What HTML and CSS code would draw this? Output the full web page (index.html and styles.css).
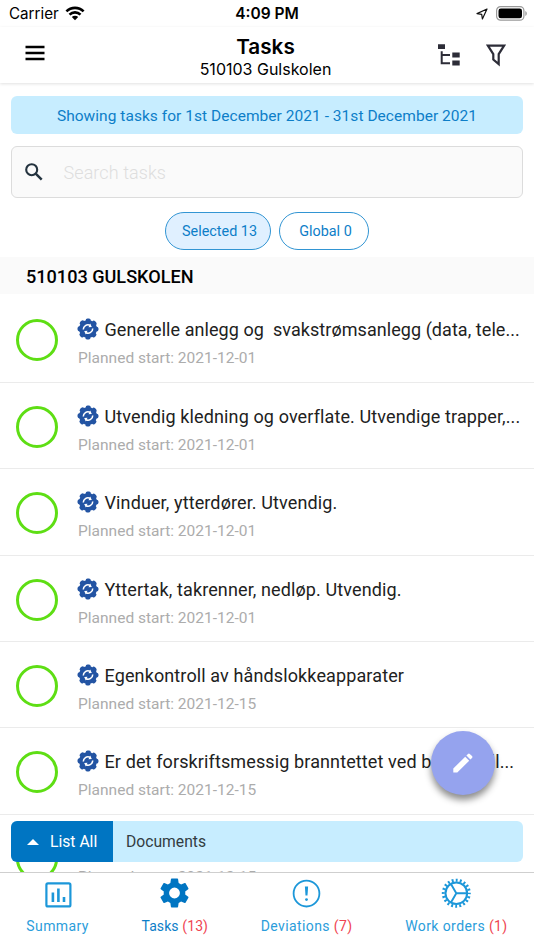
FILE: index.html
```
<!DOCTYPE html>
<html lang="en">
<head>
    <meta charset="UTF-8">
    <meta name="viewport" content="width=device-width, initial-scale=1.0">
    <title>Tasks</title>
    <link rel="stylesheet" href="styles.css">
</head>
<body>
    <svg class="sprite">
        <symbol id="recurring" viewBox="0 0 22 22">
            <circle cx="11" cy="11" r="9" fill="#2354a3"/>
            <circle cx="11" cy="11" r="8.6" fill="none" stroke="#2354a3" stroke-width="3.8" stroke-linecap="round" stroke-dasharray="1.4 5.354" stroke-dashoffset=".7"/>
            <path d="M6.300 11.600a4.700 4.700 0 0 1 6.700-4.400M15.700 10.400a4.700 4.700 0 0 1-6.700 4.400" fill="none" stroke="#fff" stroke-width="1.500"/>
            <path d="M13.200 5.600l1.600 3.300-3.300.3zM8.800 16.400l-1.600-3.300 3.300-.3z" fill="#fff"/>
        </symbol>
    </svg>

    <div class="screen">
        <div class="status-bar">
            <div class="carrier">
                <span>Carrier</span>
                <svg width="20" height="15" viewBox="0 0 20 15">
                    <path d="M1.400 5.400a12.200 12.200 0 0 1 17.200 0M4.500 8.600a7.800 7.800 0 0 1 11 0" fill="none" stroke="#000" stroke-width="2.600"/>
                    <path d="M6.800 11.100a4.600 4.600 0 0 1 6.400 0L10 14.300z"/>
                </svg>
            </div>
            <div class="clock">4:09 PM</div>
            <div class="battery">
                <svg width="12" height="12" viewBox="0 0 12 12">
                    <path d="M11 1L1 5.600l4.700.7.700 4.700z" fill="none" stroke="#111" stroke-width="1.200" stroke-linejoin="round"/>
                </svg>
                <svg width="31" height="15" viewBox="0 0 31 15">
                    <rect x=".6" y=".6" width="27.300" height="13.600" rx="4" fill="#fff" stroke="#999" stroke-width="1.200"/>
                    <rect x="2.500" y="2.500" width="23.500" height="9.800" rx="2.300"/>
                    <path d="M29.300 5v5c2-.8 2-4.200 0-5z" fill="#999"/>
                </svg>
            </div>
        </div>

        <div class="header">
            <svg class="menu-icon" width="20" height="16" viewBox="0 0 20 16">
                <path d="M.5 2h19M.5 8h19M.5 14h19" stroke="#000" stroke-width="2.500"/>
            </svg>
            <div class="heading">
                <h1>Tasks</h1>
                <p>510103 Gulskolen</p>
            </div>
            <div class="actions">
                <svg width="22" height="22" viewBox="0 0 22 22">
                    <path d="M0 .3h7v4.700H0zM14.300 8.500h7.400v5h-7.400zM14.300 16.500h7.400v5h-7.400z" fill="#2d2d38"/>
                    <path d="M3.700 7.300v12h8.300M3.700 11h8.300" fill="none" stroke="#2d2d38" stroke-width="2"/>
                </svg>
                <svg width="20" height="23" viewBox="0 0 20 23">
                    <path d="M1.900 1.600h16.200l-5.400 8.500v10l-5.400-4.500v-5.500z" fill="none" stroke="#2d2d38" stroke-width="2.200"/>
                </svg>
            </div>
        </div>

        <div class="filters">
            <div class="period">Showing tasks for 1st December 2021 - 31st December 2021</div>
            <div class="search">
                <svg width="18" height="18" viewBox="0 0 18 18">
                    <circle cx="6.700" cy="6.700" r="5.500" fill="none" stroke="#24333f" stroke-width="2.100"/>
                    <path d="M10.700 10.700l6 6" stroke="#24333f" stroke-width="2.500"/>
                </svg>
                <span>Search tasks</span>
            </div>
            <div class="chips">
                <div class="chip chip-selected">Selected 13</div>
                <div class="chip chip-global">Global 0</div>
            </div>
        </div>

        <div class="section-title">510103 GULSKOLEN</div>

        <div class="task-list">
            <div class="task">
                <div class="circle"></div>
                <div class="task-text">
                    <div class="task-title tight"><svg class="gear"><use href="#recurring"/></svg><span>Generelle anlegg og&nbsp; svakstrømsanlegg (data, tele...</span></div>
                    <div class="task-date">Planned start: 2021-12-01</div>
                </div>
            </div>
            <div class="task">
                <div class="circle"></div>
                <div class="task-text">
                    <div class="task-title"><svg class="gear"><use href="#recurring"/></svg><span>Utvendig kledning og overflate. Utvendige trapper,...</span></div>
                    <div class="task-date">Planned start: 2021-12-01</div>
                </div>
            </div>
            <div class="task">
                <div class="circle"></div>
                <div class="task-text">
                    <div class="task-title"><svg class="gear"><use href="#recurring"/></svg><span>Vinduer, ytterdører. Utvendig.</span></div>
                    <div class="task-date">Planned start: 2021-12-01</div>
                </div>
            </div>
            <div class="task">
                <div class="circle"></div>
                <div class="task-text">
                    <div class="task-title"><svg class="gear"><use href="#recurring"/></svg><span>Yttertak, takrenner, nedløp. Utvendig.</span></div>
                    <div class="task-date">Planned start: 2021-12-01</div>
                </div>
            </div>
            <div class="task">
                <div class="circle"></div>
                <div class="task-text">
                    <div class="task-title"><svg class="gear"><use href="#recurring"/></svg><span>Egenkontroll av håndslokkeapparater</span></div>
                    <div class="task-date">Planned start: 2021-12-15</div>
                </div>
            </div>
            <div class="task">
                <div class="circle"></div>
                <div class="task-text">
                    <div class="task-title"><svg class="gear"><use href="#recurring"/></svg><span>Er det forskriftsmessig branntettet ved brannskill...</span></div>
                    <div class="task-date">Planned start: 2021-12-15</div>
                </div>
            </div>
            <div class="task">
                <div class="circle"></div>
                <div class="task-text">
                    <div class="task-title"></div>
                    <div class="task-date">Planned start: 2021-12-15</div>
                </div>
            </div>
        </div>

        <div class="fab">
            <svg width="22" height="22" viewBox="0 0 22 22">
                <path d="M1.300 16.600L13.200 4.700l4 4L5.300 20.600h-4zM14.400 3.500l1.600-1.600q.9-.9 1.800 0l2.200 2.200q.9.900 0 1.800l-1.600 1.600z" fill="#fff"/>
            </svg>
        </div>

        <div class="drawer">
            <div class="list-all">
                <svg width="12" height="6" viewBox="0 0 12 6"><path d="M0 6l6-6 6 6z" fill="#fff"/></svg>
                <span>List All</span>
            </div>
            <div class="documents">Documents</div>
        </div>

        <div class="tab-bar">
            <div class="tab">
                <svg width="36" height="36" viewBox="0 0 36 36" fill="none" stroke="#1c97d9">
                    <rect x="6.400" y="8.400" width="24" height="23" rx="1.500" stroke-width="2.200"/>
                    <path d="M12.900 17.500v9.500M18.400 13.500v13.500M24 22v5" stroke-width="2.600"/>
                </svg>
                <span>Summary</span>
            </div>
            <div class="tab tab-active">
                <svg width="37" height="36" viewBox="0 0 24 24" fill="#0075c2">
                    <path d="M19.140 12.940c.04-.3.060-.610.060-.940s-.020-.640-.070-.940l2.030-1.580c.180-.140.230-.410.120-.610l-1.920-3.320c-.120-.220-.370-.290-.590-.220l-2.390.960c-.5-.380-1.030-.7-1.620-.940L14.400 2.810c-.040-.240-.240-.410-.480-.410h-3.840c-.240 0-.430.170-.470.410L9.250 5.350C8.660 5.590 8.120 5.920 7.630 6.290L5.240 5.330c-.220-.080-.470 0-.590.220L2.740 8.870c-.120.210-.080.470.120.610l2.030 1.580c-.050.300-.090.630-.090.940s.020.640.070.940l-2.030 1.580c-.180.140-.230.410-.120.610l1.920 3.320c.120.220.370.290.590.220l2.390-.960c.5.380 1.030.7 1.620.940l.360 2.540c.050.240.240.410.480.410h3.840c.240 0 .440-.170.470-.410l.360-2.540c.590-.240 1.130-.560 1.620-.940l2.390.960c.220.080.470 0 .590-.220l1.920-3.320c.120-.220.070-.470-.120-.610zM12 15.600a3.600 3.600 0 1 1 0-7.200 3.600 3.600 0 0 1 0 7.200z"/>
                </svg>
                <span>Tasks <b>(13)</b></span>
            </div>
            <div class="tab">
                <svg width="36" height="36" viewBox="0 0 36 36">
                    <circle cx="17.500" cy="18.600" r="12.900" fill="none" stroke="#1c97d9" stroke-width="1.800"/>
                    <path d="M15.900 11.600h3.200l-.6 9h-2z" fill="#1c97d9"/>
                    <circle cx="17.500" cy="24.600" r="1.400" fill="#1c97d9"/>
                </svg>
                <span>Deviations <b>(7)</b></span>
            </div>
            <div class="tab">
                <svg width="36" height="36" viewBox="0 0 36 36" fill="none" stroke="#1c97d9">
                    <circle cx="18.300" cy="18.200" r="10.800" stroke-width="2"/>
                    <circle cx="18.300" cy="18.200" r="13" stroke-width="3" stroke-dasharray="1.900 2.184" stroke-dashoffset=".95"/>
                    <path d="M18.300 18.200h11M18.300 18.200l-5.500-9.500M18.300 18.200l-5.500 9.500" stroke-width="1.900"/>
                </svg>
                <span>Work orders <b>(1)</b></span>
            </div>
        </div>
    </div>
</body>
</html>
```
FILE: styles.css
```
* {
    box-sizing: border-box;
}
body {
    margin: 0;
    font-family: Roboto, sans-serif;
    background-color: #fff;
    color: #212121;
}
svg {
    display: block;
    flex-shrink: 0;
}
.sprite {
    display: none;
}
.screen {
    position: relative;
    display: flex;
    flex-direction: column;
    width: 534px;
    height: 950px;
    overflow: hidden;
}

/* status bar and header */
.status-bar {
    display: grid;
    grid-template-columns: 1fr auto 1fr;
    align-items: center;
    height: 27px;
    padding: 0 7px 0 9px;
    font-family: Inter, sans-serif;
    font-size: 15.5px;
    color: #000;
}
.carrier,
.battery {
    display: flex;
    align-items: center;
    gap: 6px;
}
.carrier {
    font-size: 15.2px;
}
.battery {
    justify-content: flex-end;
    gap: 8px;
}
.clock {
    padding-right: 2px;
    font-weight: 600;
}
.header {
    display: grid;
    grid-template-columns: 1fr auto 1fr;
    align-items: center;
    flex-shrink: 0;
    height: 56px;
    padding: 0 28px 0 25px;
    font-family: Inter, sans-serif;
    color: #000;
    box-shadow: 0 1px 3px rgba(0, 0, 0, 0.12);
}
.menu-icon {
    margin-top: -4px;
}
.heading {
    padding-top: 3px;
    text-align: center;
}
.heading h1 {
    margin: 0;
    font-size: 20.7px;
    font-weight: 600;
    line-height: 25px;
}
.heading p {
    margin: 0;
    font-size: 16px;
    line-height: 21px;
}
.actions {
    display: flex;
    justify-content: flex-end;
    align-items: center;
    gap: 26px;
}

/* period, search and chips */
.filters {
    padding: 13px 11px 7px;
}
.period {
    height: 38px;
    line-height: 40px;
    border-radius: 6px;
    background-color: #c7edff;
    color: #0d7ec8;
    font-size: 15.5px;
    letter-spacing: 0.04px;
    text-align: center;
}
.search {
    display: flex;
    align-items: center;
    gap: 21px;
    height: 52px;
    margin-top: 12px;
    padding-left: 12.5px;
    border: 1.5px solid #dcdcdc;
    border-radius: 6px;
    background-color: #fafafa;
    color: #dedede;
    font-size: 18px;
    font-weight: 300;
    letter-spacing: 0.08px;
}
.chips {
    display: flex;
    justify-content: center;
    gap: 8px;
    margin-top: 14px;
}
.chip {
    height: 38px;
    padding-left: 3px;
    line-height: 38px;
    border: 1px solid #3295d3;
    border-radius: 19px;
    color: #0d7ec8;
    font-size: 14.4px;
    text-align: center;
}
.chip-selected {
    width: 106px;
    background-color: #e0f0ff;
}
.chip-global {
    width: 90px;
}
.section-title {
    flex-shrink: 0;
    height: 37px;
    padding-left: 26px;
    background-color: #fafafa;
    color: #000;
    font-size: 18.1px;
    font-weight: 500;
    line-height: 39px;
}

/* tasks */
.task-list {
    flex: 1;
    min-height: 0;
    padding-top: 2.3px;
    overflow: hidden;
}
.task {
    display: flex;
    height: 86.45px;
    padding: 23px 0 0 16px;
    border-bottom: 1.5px solid #ebebeb;
}
.circle {
    width: 42px;
    height: 42px;
    margin-right: 19px;
    border: 3px solid #5ede14;
    border-radius: 50%;
}
.task-title {
    display: flex;
    gap: 5.5px;
    height: 22px;
    font-size: 18px;
    line-height: 22px;
    letter-spacing: 0.12px;
    white-space: nowrap;
}
.tight {
    letter-spacing: 0.06px;
}
.gear {
    width: 22px;
    height: 22px;
    margin-top: -1px;
}
.task-date {
    margin: 8px 0 0 1px;
    color: #acacac;
    font-size: 15.5px;
    line-height: 19px;
    letter-spacing: 0.01px;
}

/* floating controls */
.fab {
    position: absolute;
    top: 731px;
    left: 431px;
    display: flex;
    align-items: center;
    justify-content: center;
    width: 64px;
    height: 64px;
    border-radius: 50%;
    background-color: #95a3ee;
    box-shadow: 0 5px 7px rgba(0, 0, 0, 0.45);
}
.drawer {
    position: absolute;
    top: 821px;
    left: 11px;
    right: 11px;
    display: flex;
    height: 41px;
    border-radius: 6px;
    background-color: #c7edff;
    font-size: 15.7px;
    line-height: 42px;
    overflow: hidden;
}
.list-all {
    display: flex;
    align-items: center;
    gap: 11px;
    width: 102px;
    padding-left: 16px;
    background-color: #0075c2;
    color: #fff;
}
.documents {
    padding-left: 13px;
    color: #333c42;
}

/* bottom tabs */
.tab-bar {
    display: flex;
    justify-content: space-around;
    flex-shrink: 0;
    height: 78px;
    padding-top: 2px;
    border-top: 1px solid #cfcfcf;
    background-color: #fff;
}
.tab {
    display: flex;
    flex-direction: column;
    align-items: center;
    gap: 5px;
    color: #2b9ddb;
    font-size: 14px;
    line-height: 20px;
    letter-spacing: 0.4px;
    white-space: nowrap;
}
.tab-active {
    color: #0d7ec8;
    letter-spacing: 0.1px;
}
.tab b {
    color: #f04452;
    font-weight: 400;
}
```
